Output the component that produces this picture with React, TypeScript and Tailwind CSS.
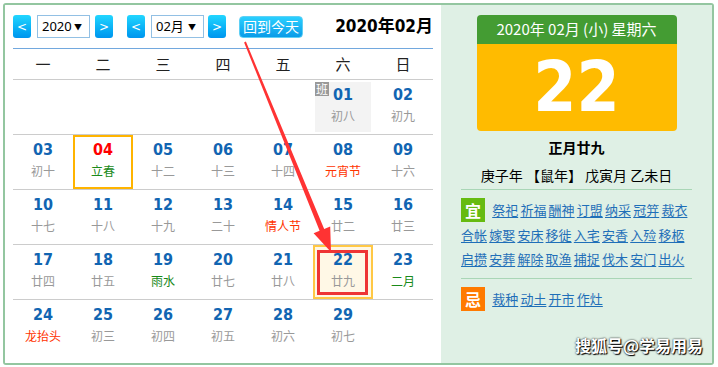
import React from "react";

type Cell = { d: string; l: string; lc?: string; dc?: string; ban?: boolean; today?: boolean; sel?: boolean } | null;

const G = "#1a8a1a";
const R = "#ff3300";

const rows: Cell[][] = [
  [null, null, null, null, null, { d: "01", l: "初八", ban: true }, { d: "02", l: "初九" }],
  [
    { d: "03", l: "初十" },
    { d: "04", l: "立春", lc: G, dc: "#ff0000", today: true },
    { d: "05", l: "十二" },
    { d: "06", l: "十三" },
    { d: "07", l: "十四" },
    { d: "08", l: "元宵节", lc: R },
    { d: "09", l: "十六" },
  ],
  [
    { d: "10", l: "十七" },
    { d: "11", l: "十八" },
    { d: "12", l: "十九" },
    { d: "13", l: "二十" },
    { d: "14", l: "情人节", lc: R },
    { d: "15", l: "廿二" },
    { d: "16", l: "廿三" },
  ],
  [
    { d: "17", l: "廿四" },
    { d: "18", l: "廿五" },
    { d: "19", l: "雨水", lc: G },
    { d: "20", l: "廿七" },
    { d: "21", l: "廿八" },
    { d: "22", l: "廿九", sel: true },
    { d: "23", l: "二月", lc: G },
  ],
  [
    { d: "24", l: "龙抬头", lc: R },
    { d: "25", l: "初三" },
    { d: "26", l: "初四" },
    { d: "27", l: "初五" },
    { d: "28", l: "初六" },
    { d: "29", l: "初七" },
    null,
  ],
];

const yi = ["祭祀", "祈福", "酬神", "订盟", "纳采", "冠笄", "裁衣", "合帐", "嫁娶", "安床", "移徙", "入宅", "安香", "入殓", "移柩", "启攒", "安葬", "解除", "取渔", "捕捉", "伐木", "安门", "出火"];
const ji = ["裁种", "动土", "开市", "作灶"];

const cjk = "font-['Noto_Sans_CJK_SC',sans-serif]";
const num = "font-['DejaVu_Sans_Condensed','DejaVu_Sans',sans-serif] font-bold";

function NavBtn({ t }: { t: string }) {
  return (
    <div className="w-[18px] h-[23px] rounded-[3px] bg-linear-to-b from-[#22d6ff] to-[#0095ee] text-white text-[12px] flex items-center justify-center font-['DejaVu_Sans',sans-serif] leading-none">
      {t}
    </div>
  );
}

function Sel({ t }: { t: string }) {
  return (
    <div className={`w-[53px] h-[23px] border border-[#92c0e4] flex items-center justify-between pl-[4px] pr-[7px] text-[13px] text-black ${cjk}`}>
      <span className="font-['Noto_Sans','Noto_Sans_CJK_SC',sans-serif]">{t}</span>
      <span className="text-[8px] leading-none">▼</span>
    </div>
  );
}

export default function App() {
  return (
    <div className="w-[718px] h-[367px] bg-white relative overflow-hidden">
      <div className="ml-[3px] mt-[3px] w-[711px] h-[362px] border-2 border-[#93c6a0] rounded-[3px] flex overflow-hidden">
        {/* Left calendar */}
        <div className="w-[436px] bg-white px-[8px]">
          <div className="h-[44px] flex items-center border-b border-[#72a8de]">
            <NavBtn t="<" />
            <div className="ml-[6px]"><Sel t="2020" /></div>
            <div className="ml-[5px]"><NavBtn t=">" /></div>
            <div className="ml-[14px]"><NavBtn t="<" /></div>
            <div className="ml-[6px]"><Sel t="02月" /></div>
            <div className="ml-[4px]"><NavBtn t=">" /></div>
            <div className={`ml-[13px] w-[64px] h-[22px] rounded-[4px] border border-[#5fd0f5] bg-linear-to-b from-[#2ad0ff] to-[#0a9be8] text-white text-[14px] flex items-center justify-center ${cjk}`}>
              回到今天
            </div>
            <div className={`ml-auto text-[17px] font-bold text-black font-['DejaVu_Sans_Condensed','DejaVu_Sans','Noto_Sans_CJK_SC',sans-serif]`}>
              2020年02月
            </div>
          </div>
          <div className={`grid grid-cols-7 h-[31px] border-b border-[#cccccc] items-center text-center text-[15px] text-[#222] ${cjk}`}>
            {["一", "二", "三", "四", "五", "六", "日"].map((w) => (
              <div key={w}>{w}</div>
            ))}
          </div>
          {rows.map((row, ri) => (
            <div key={ri} className={`grid grid-cols-7 h-[55px] ${ri < rows.length - 1 ? "border-b border-[#cccccc]" : ""}`}>
              {row.map((c, ci) => (
                <div key={ci} className={`relative flex flex-col items-center ${c?.sel ? "bg-[#fff8e6]" : ""}`}>
                  {c && (
                    <>
                      {c.ban && (
                        <>
                          <div className="absolute inset-[2px] bg-[#f3f3f3]" />
                          <div className={`absolute left-[2px] top-[2px] w-[14px] h-[14px] bg-[#999] text-white text-[12px] leading-[14px] text-center ${cjk}`}>班</div>
                        </>
                      )}
                      <div className={`relative mt-[5px] h-[20px] leading-[20px] text-[16px] ${num}`} style={{ color: c.dc ?? "#1165b2" }}>
                        {c.d}
                      </div>
                      <div className={`relative mt-[3px] h-[16px] leading-[16px] text-[12px] ${cjk}`} style={{ color: c.lc ?? "#999999" }}>
                        {c.l}
                      </div>
                      {c.today && <div className="absolute inset-0 border-2 border-[#ffb400] pointer-events-none" />}
                      {c.sel && (
                        <>
                          <div className="absolute inset-0 border-2 border-[#ffc845] pointer-events-none" />
                          <div className="absolute left-[4px] top-[5px] right-[5px] bottom-[4px] border-[3px] border-[#ee3535] pointer-events-none" />
                        </>
                      )}
                    </>
                  )}
                </div>
              ))}
            </div>
          ))}
        </div>
        {/* Right panel */}
        <div className="flex-1 bg-[#dff0e5] px-[20px] pt-[10px] relative">
          <div className="mx-auto w-[200px]">
            <div className={`h-[29px] rounded-t-[4px] bg-[#449c33] text-white text-[15px] flex items-center justify-center ${cjk}`}>
              2020年 02月 (小) 星期六
            </div>
            <div className="h-[87px] rounded-b-[4px] bg-[#ffbb00] flex items-center justify-center">
              <span className={`text-white text-[69px] leading-none ${num}`}>22</span>
            </div>
          </div>
          <div className={`mt-[6px] text-center text-[14px] font-bold text-black leading-[20px] ${cjk}`}>正月廿九</div>
          <div className={`mt-[8px] text-center text-[14px] text-black leading-[20px] ${cjk}`}>庚子年 【鼠年】 戊寅月 乙未日</div>
          <div className="mt-[4px] border-t border-[#a9d6b6]" />
          <div className={`mt-[8px] flex flex-wrap gap-x-[2.2px] text-[13px] ${cjk}`}>
            <div className="w-[24px] h-[24px] bg-[#66bb11] text-white font-bold text-[16px] flex items-center justify-center mr-[5px]">宜</div>
            {yi.map((w, i) => (
              <span key={i} className="h-[24.5px] leading-[24px] text-[#1f6fb8] underline underline-offset-2">{w}</span>
            ))}
          </div>
          <div className="mt-[6px] border-t border-[#a9d6b6]" />
          <div className={`mt-[8px] flex flex-wrap gap-x-[2.2px] text-[13px] ${cjk}`}>
            <div className="w-[24px] h-[24px] bg-[#ff7a00] text-white font-bold text-[16px] flex items-center justify-center mr-[5px]">忌</div>
            {ji.map((w, i) => (
              <span key={i} className="h-[24px] leading-[24px] text-[#1f6fb8] underline underline-offset-2">{w}</span>
            ))}
          </div>
          <div className={`absolute right-[9px] bottom-[6px] text-white font-bold text-[16px] [text-shadow:0_0_2px_#000,1px_1px_1px_#000] ${cjk}`}>
            搜狐号@学易用易
          </div>
        </div>
      </div>
      <svg className="absolute left-0 top-0 pointer-events-none" width="718" height="367">
        <polygon
          points="244.1,42.4 245.9,41.6 324.2,228.9 330.2,226.4 331,252 313.6,233.2 319.6,230.7"
          fill="#ff3333"
        />
      </svg>
    </div>
  );
}
